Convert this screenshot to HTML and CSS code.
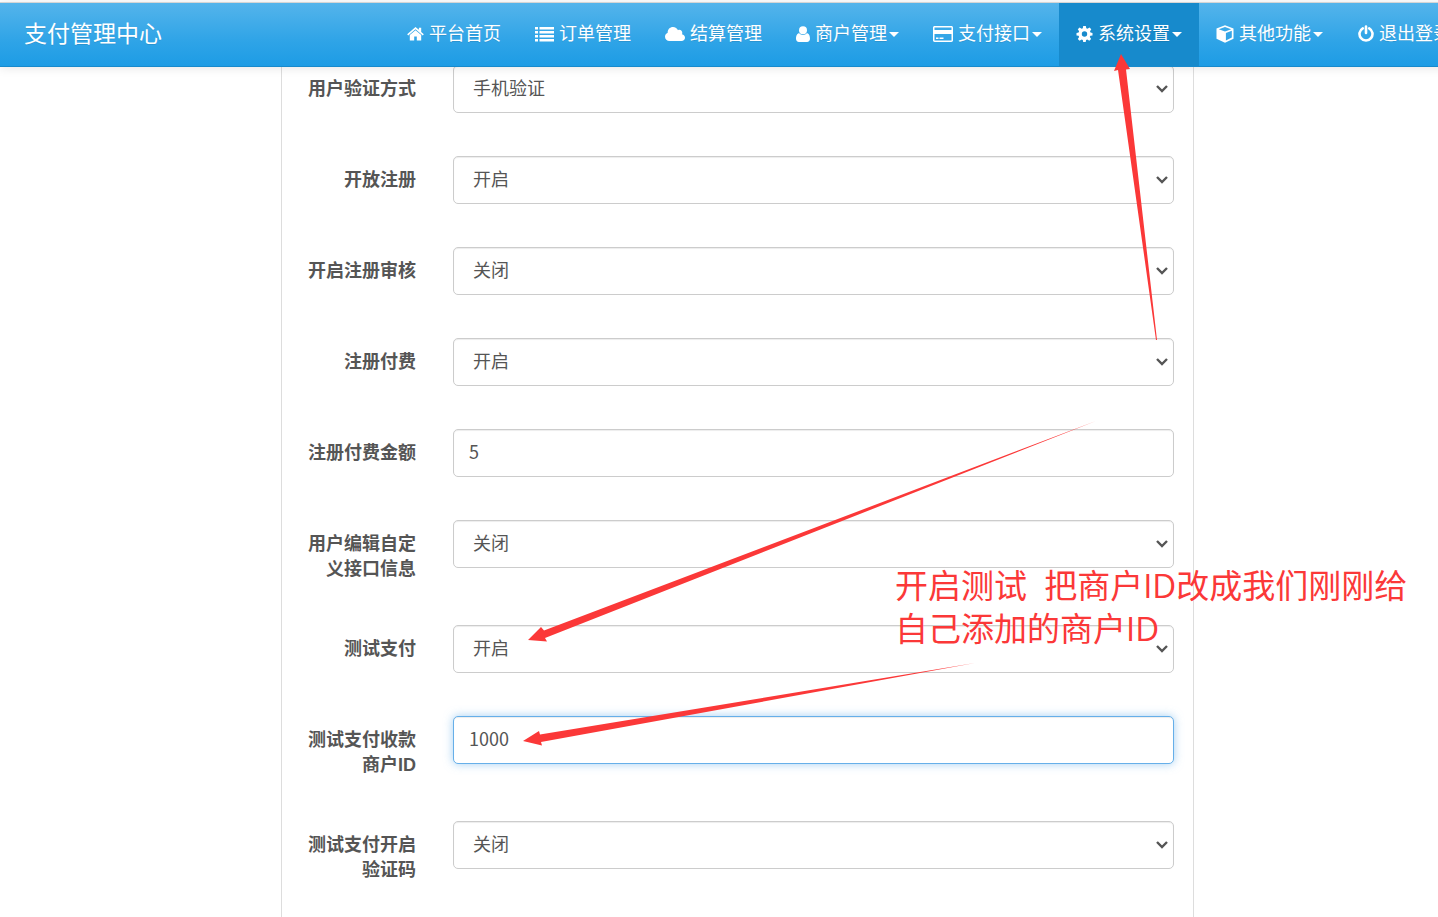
FILE: index.html
```html
<!DOCTYPE html>
<html lang="zh-CN">
<head>
<meta charset="utf-8">
<title>支付管理中心</title>
<link rel="stylesheet" href="styles.css">
</head>
<body>
<div class="page">
  <header class="navbar">
    <a class="brand" href="#">支付管理中心</a>
    <nav class="menu">
      <a class="item" href="#"><svg class="icon" width="17" height="16" viewBox="0 0 17 16"><path d="M8.500 1 .2 8.200l1 1.200L8.500 3.200l7.300 6.200 1-1.200-2.600-2.300V1.800h-2.300v2L8.500 1z"/><path d="M8.500 4.300 2.800 9.100V14.500h4.400v-4h2.600v4h4.400V9.100z"/></svg>平台首页</a>
      <a class="item" href="#"><svg class="icon" width="19" height="16" viewBox="0 0 19 16"><path d="M0 1h3v2.500H0zM4.500 1H19v2.500H4.500zM0 5h3v2.500H0zM4.500 5H19v2.500H4.500zM0 9h3v2.500H0zM4.500 9H19v2.500H4.500zM0 13h3v2.500H0zM4.500 13H19v2.500H4.500z"/></svg>订单管理</a>
      <a class="item" href="#"><svg class="icon" width="20" height="16" viewBox="0 0 20 16"><path d="M4.500 15C2 15 0 13.200 0 10.700c0-1.800 1.100-3.200 2.700-3.900C2.500 3.300 5 1 8 1c2.300 0 4.200 1.300 5 3.200 2-1 4.500.4 4.300 2.900 0 .4-.1.800-.3 1.100 1.800.4 3 1.700 3 3.500 0 1.900-1.500 3.300-3.500 3.300z"/></svg>结算管理</a>
      <a class="item" href="#"><svg class="icon" width="14" height="16" viewBox="0 0 14 16"><circle cx="7" cy="4.300" r="4"/><path d="M3.300 7.300C1 7.300 0 9.800 0 12.800 0 14.800 1.200 16 3 16h8c1.800 0 3-1.200 3-3.200 0-3-1-5.500-3.300-5.500C9.800 8.300 8.500 9 7 9s-2.800-.7-3.700-1.700z"/></svg>商户管理<span class="caret"></span></a>
      <a class="item" href="#"><svg class="icon" width="20" height="16" viewBox="0 0 20 16"><path fill-rule="evenodd" d="M1.700 0h16.600C19.300 0 20 .7 20 1.700v12.600c0 1-.7 1.700-1.700 1.700H1.700C.7 16 0 15.300 0 14.300V1.700C0 .7.700 0 1.700 0zM1.500 1.500v2.500h17V1.500zM1.500 8v6.500h17V8z"/><path d="M3 11.500h2.500V13H3zM6.500 11.500h4V13h-4z"/></svg>支付接口<span class="caret"></span></a>
      <a class="item active" href="#"><svg class="icon" width="17" height="16" viewBox="0 0 16 16"><path fill-rule="evenodd" d="M6.700 0h2.600l.5 2.300 1.200.5 2-1.300 1.800 1.800-1.300 2 .5 1.200 2 .4v2.500l-2.200.4-.5 1.200 1.300 2-1.800 1.800-2-1.300-1.200.5-.4 2H6.700l-.4-2-1.200-.5-2 1.300-1.800-1.800 1.300-2-.5-1.200L0 9.400V6.900l2.100-.4.5-1.200-1.300-2 1.800-1.800 2 1.300 1.200-.5zM8 5.300a2.700 2.700 0 1 0 0 5.400 2.700 2.700 0 0 0 0-5.400z"/></svg>系统设置<span class="caret"></span></a>
      <a class="item" href="#"><svg class="icon" width="18" height="18" viewBox="0 0 18 18"><path fill-rule="evenodd" d="M9 .3 17.500 3.500v10.200L9 17.800.5 13.700V3.500zM9 2 2.800 4.300 9 6.600l6.200-2.300zM9.900 8v7.500l5.900-2.900V5.800z"/></svg>其他功能<span class="caret"></span></a>
      <a class="item" href="#"><svg class="icon" width="17" height="17" viewBox="0 0 17 17"><path d="M5.800 3.300a6.500 6.500 0 1 0 6.400 0M9 1.500v6.500" fill="none" stroke="#fff" stroke-width="2.600" stroke-linecap="round"/></svg>退出登录</a>
    </nav>
  </header>

  <main class="panel">
    <form class="form">
      <div class="row"><label for="verify">用户验证方式</label><select id="verify" class="control"><option>手机验证</option></select></div>
      <div class="row"><label for="open">开放注册</label><select id="open" class="control"><option>开启</option></select></div>
      <div class="row"><label for="audit">开启注册审核</label><select id="audit" class="control"><option>关闭</option></select></div>
      <div class="row"><label for="pay">注册付费</label><select id="pay" class="control"><option>开启</option></select></div>
      <div class="row"><label for="price">注册付费金额</label><input id="price" class="control" type="text" value="5"></div>
      <div class="row"><label for="edit">用户编辑自定义接口信息</label><select id="edit" class="control"><option>关闭</option></select></div>
      <div class="row"><label for="test">测试支付</label><select id="test" class="control"><option>开启</option></select></div>
      <div class="row"><label for="pid">测试支付收款商户ID</label><input id="pid" class="control current" type="text" value="1000"></div>
      <div class="row"><label for="captcha">测试支付开启验证码</label><select id="captcha" class="control"><option>关闭</option></select></div>
    </form>
  </main>

  <svg class="arrows" width="1438" height="917" viewBox="0 0 1438 917">
    <path d="M1121 54 1130 69 1126 69.500 1157 340H1156L1118 70 1114 71z"/>
    <path d="M528 640 541 627 544 630.500 1096 421 545 638 547 641.500z"/>
    <path d="M523 741 539 731 540 734.500 975 663 541 742 542 745.500z"/>
  </svg>
  <p class="note">开启测试  把商户ID改成我们刚刚给
自己添加的商户ID</p>
</div>
</body>
</html>
```

FILE: styles.css
```css
* {
  box-sizing: border-box;
}

html,
body {
  margin: 0;
  height: 100%;
  overflow: hidden;
}

body {
  background: #fff;
  color: #555;
  font: 18px/25px "Liberation Sans", "Noto Sans CJK SC", sans-serif;
}

.page {
  position: relative;
  display: flex;
  flex-direction: column;
  min-width: 1475px;
  min-height: 100%;
  padding-top: 2px;
}

.navbar {
  position: relative;
  z-index: 1;
  display: flex;
  justify-content: space-between;
  height: 65px;
  padding: 0 7px 0 24px;
  border-top: 1px solid #d5d5d5;
  border-bottom: 1px solid #178acc;
  background: linear-gradient(#54b4eb, #2fa4e7 60%, #1d9ce5);
  box-shadow: 0 1px 10px rgba(0, 0, 0, 0.1);
  text-shadow: 0 1px 0 rgba(0, 0, 0, 0.1);
}

.brand {
  display: flex;
  align-items: center;
  color: #fff;
  font-size: 23px;
  text-decoration: none;
}

.menu {
  display: flex;
}

.item {
  display: flex;
  align-items: center;
  padding: 0 17px;
  color: #fff;
  text-decoration: none;
  white-space: nowrap;
}

.item.active {
  background: #178acc;
}

.icon {
  margin: 0 5px 2px 0;
  fill: #fff;
}

.caret {
  margin-left: 2px;
  border: 5px solid transparent;
  border-top-color: #fff;
  border-bottom: 0;
}

.panel {
  flex: 1;
  width: 913px;
  margin: -2px auto 0;
  padding: 0 19px;
  border: solid #ddd;
  border-width: 0 1px;
}

.form {
  display: flex;
  flex-direction: column;
  gap: 43px;
  padding-bottom: 43px;
}

.row {
  display: grid;
  grid-template-columns: 115px 1fr;
  column-gap: 37px;
  align-items: start;
}

.row label {
  padding-top: 12px;
  font-weight: bold;
  text-align: right;
}

.control {
  width: 100%;
  height: 48px;
  padding: 0 15px 4px;
  border: 1px solid #ccc;
  border-radius: 5px;
  outline: 0;
  background-color: #fff;
  box-shadow: inset 0 1px 1px rgba(0, 0, 0, 0.075);
  color: #555;
  font: 18px "Noto Sans CJK SC", sans-serif;
}

select.control {
  appearance: none;
  padding-left: 19px;
  background-image: url("data:image/svg+xml,%3Csvg xmlns='http://www.w3.org/2000/svg' width='12' height='8' viewBox='0 0 12 8'%3E%3Cpath d='M1 1l5 5 5-5' fill='none' stroke='%23555' stroke-width='2.400'/%3E%3C/svg%3E");
  background-position: right 5px center;
  background-repeat: no-repeat;
}

.control.current {
  border-color: #66afe9;
  box-shadow: inset 0 1px 1px rgba(0, 0, 0, 0.075), 0 0 10px rgba(102, 175, 233, 0.6);
}

.arrows {
  position: absolute;
  top: 0;
  left: 0;
  z-index: 2;
  fill: #fb3838;
  pointer-events: none;
}

.note {
  position: absolute;
  top: 564px;
  left: 895px;
  z-index: 2;
  margin: 0;
  color: #fb3838;
  font: 33px/43px "Open Sans", "Noto Sans CJK SC", sans-serif;
  white-space: pre;
}
```
